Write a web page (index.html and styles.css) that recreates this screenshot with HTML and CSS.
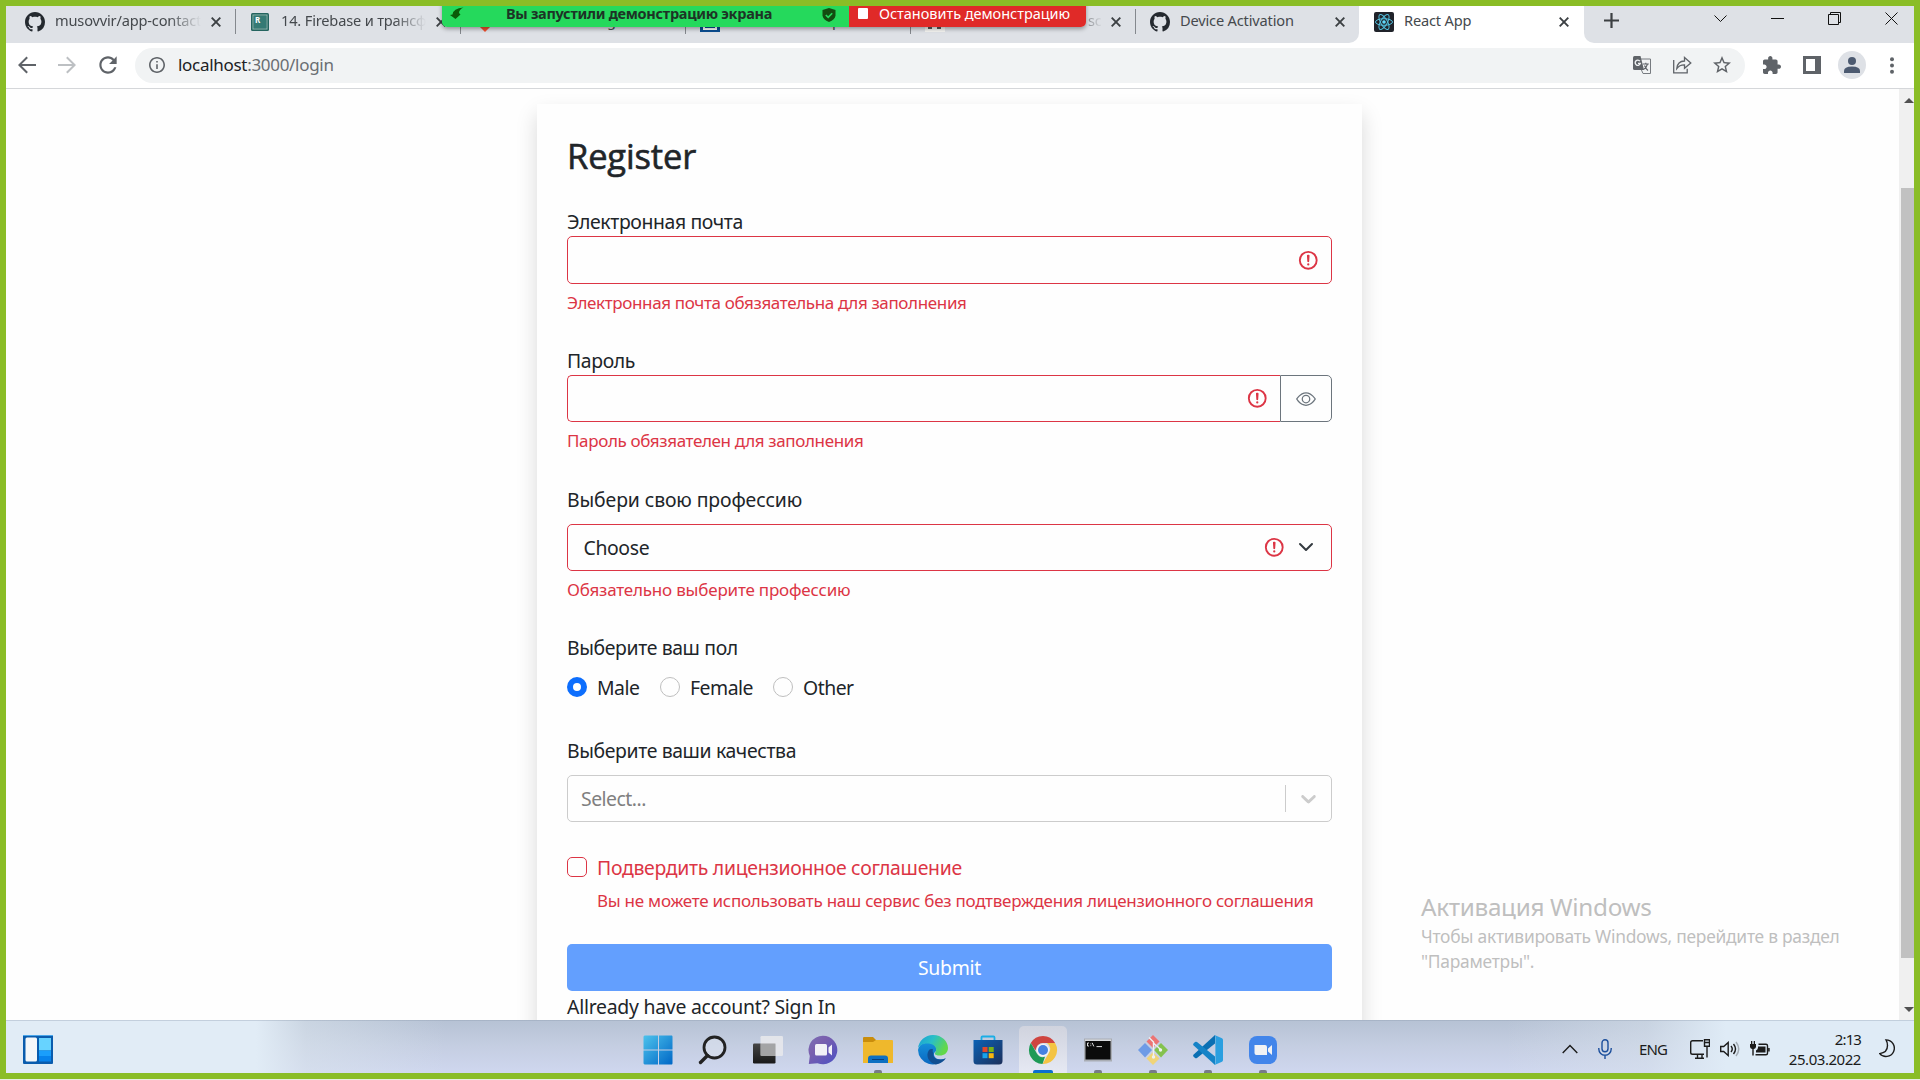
FILE: index.html
```html
<!DOCTYPE html>
<html lang="ru">
<head>
<meta charset="utf-8">
<title>React App</title>
<link rel="stylesheet" href="styles.css">
</head>
<body>
<svg class="defs" aria-hidden="true">
  <symbol id="github" viewBox="0 0 16 16"><path fill="#24292f" d="M8 0C3.58 0 0 3.58 0 8c0 3.54 2.29 6.53 5.47 7.59.4.07.55-.17.55-.38 0-.19-.01-.82-.01-1.49-2.01.37-2.53-.49-2.69-.94-.09-.23-.48-.94-.82-1.13-.28-.15-.68-.52-.01-.53.63-.01 1.08.58 1.23.82.72 1.21 1.87.87 2.33.66.07-.52.28-.87.51-1.07-1.78-.2-3.64-.89-3.64-3.95 0-.87.31-1.59.82-2.15-.08-.2-.36-1.02.08-2.12 0 0 .67-.21 2.2.82.64-.18 1.32-.27 2-.27s1.36.09 2 .27c1.53-1.04 2.2-.82 2.2-.82.44 1.1.16 1.92.08 2.12.51.56.82 1.27.82 2.15 0 3.07-1.87 3.75-3.65 3.95.29.25.54.73.54 1.48 0 1.07-.01 1.93-.01 2.2 0 .21.15.46.55.38A8.01 8.01 0 0 0 16 8c0-4.42-3.58-8-8-8z"/></symbol>
  <symbol id="close" viewBox="0 0 10 10"><path d="M.7.7l8.6 8.6M9.3.7L.7 9.3" stroke="#3c4043" stroke-width="1.9" fill="none"/></symbol>
  <symbol id="invalid" viewBox="0 0 12 12"><g stroke="#dc3545" fill="none"><circle cx="6" cy="6" r="4.5"/><path stroke-linejoin="round" d="M5.8 3.6h.4L6 6.5z"/></g><circle cx="6" cy="8.2" r=".6" fill="#dc3545"/></symbol>
</svg>

<header class="tabs">
  <div class="tab tab-repo"><svg class="fav"><use href="#github"/></svg><span class="tab-title fade">musovvir/app-contacts</span><svg class="x"><use href="#close"/></svg></div>
  <div class="tab tab-lesson">
    <svg class="fav-sm" viewBox="0 0 18 18"><rect width="18" height="18" rx="1.500" fill="#24645f"/><rect x="2" y="2" width="14" height="14" fill="none" stroke="#8fb9b2" stroke-width="1"/><rect x="3" y="3" width="12" height="12" fill="#357a74"/><text x="4" y="9.500" class="fav-letter">R</text></svg>
    <span class="tab-title fade">14. Firebase и трансформация</span><svg class="x"><use href="#close"/></svg>
  </div>
  <div class="tab tab-narrow"><svg class="fav" viewBox="0 0 20 20"><path d="M10 0l10 10-10 10L0 10z" fill="#f0502f"/></svg><span class="tab-title">g</span></div>
  <div class="tab tab-narrow"><svg class="fav" viewBox="0 0 20 20"><path fill="#0b4f93" d="M0 0h20v20H0z"/><path fill="none" stroke="#fff" stroke-width="2" d="M4 4h12v13H4z"/></svg><span class="tab-title">р</span></div>
  <div class="tab tab-cut"><svg class="fav" viewBox="0 0 20 20"><path fill="#f5f5f2" d="M0 0h20v20H0z"/><path d="M3 16h4M12 16h4" stroke="#555" stroke-width="2"/></svg><span class="tab-title fade">sc</span><svg class="x"><use href="#close"/></svg></div>
  <div class="tab tab-device"><svg class="fav"><use href="#github"/></svg><span class="tab-title">Device Activation</span><svg class="x"><use href="#close"/></svg></div>
  <div class="tab tab-active">
    <svg class="fav" viewBox="0 0 20 20"><rect width="20" height="20" rx="2" fill="#20232a"/><g fill="none" stroke="#53c1de" stroke-width="1"><ellipse cx="10" cy="10" rx="8.500" ry="3.300"/><ellipse cx="10" cy="10" rx="8.500" ry="3.300" transform="rotate(60 10 10)"/><ellipse cx="10" cy="10" rx="8.500" ry="3.300" transform="rotate(120 10 10)"/></g><circle cx="10" cy="10" r="1.800" fill="#61dafb"/></svg>
    <span class="tab-title">React App</span><svg class="x"><use href="#close"/></svg>
  </div>
  <div class="window-bar">
    <svg class="plus" viewBox="0 0 15 15"><path d="M7.500 0v15M0 7.500h15" stroke="#3c4043" stroke-width="2.200"/></svg>
    <div class="window-buttons">
      <svg viewBox="0 0 13 13"><path d="M.5 3.500l6 6 6-6"/></svg>
      <svg viewBox="0 0 13 13"><path d="M0 6.500h13"/></svg>
      <svg viewBox="0 0 13 13"><path d="M.5 2.500h10v10H.5zM2.500 2.500v-2h10v10h-2"/></svg>
      <svg viewBox="0 0 13 13"><path d="M.5.5l12 12M12.500.5l-12 12"/></svg>
    </div>
  </div>
</header>

<div class="toolbar">
  <svg class="nav" viewBox="0 0 24 24"><path d="M21 11H6.830l6.090-6.090L11.500 3.500 3 12l8.500 8.500 1.410-1.410L6.830 13H21z"/></svg>
  <svg class="nav nav-off" viewBox="0 0 24 24"><path d="M3 11h14.170l-6.090-6.090 1.420-1.410L21 12l-8.500 8.500-1.410-1.410L17.170 13H3z"/></svg>
  <svg class="nav nav-reload" viewBox="0 0 24 24"><path d="M17.650 6.350C16.200 4.900 14.210 4 12 4c-4.420 0-7.990 3.580-7.990 8s3.570 8 7.990 8c3.730 0 6.840-2.550 7.730-6h-2.080c-.82 2.330-3.040 4-5.650 4-3.310 0-6-2.690-6-6s2.690-6 6-6c1.660 0 3.140.69 4.220 1.780L13 11h7V4l-2.350 2.350z"/></svg>
  <div class="omnibox">
    <svg class="info" viewBox="2 2 20 20"><path d="M11 7h2v2h-2zm0 4h2v6h-2zm1-9C6.480 2 2 6.480 2 12s4.480 10 10 10 10-4.480 10-10S17.520 2 12 2zm0 18c-4.410 0-8-3.590-8-8s3.590-8 8-8 8 3.590 8 8-3.590 8-8 8z"/></svg>
    <span class="url"><b>localhost</b>:3000/login</span>
    <svg class="translate" viewBox="0 0 18 18"><path d="M8 3h9.500v14.500H10L8 13" fill="#f1f3f4" stroke="#777b80" stroke-width="1"/><path d="M0 1.500Q0 0 1.500 0h6L11 14H1.500Q0 14 0 12.500z" fill="#5f6368"/><path d="M6.900 5.200A2.600 2.600 0 1 0 7.300 7.400H5" fill="none" stroke="#f1f3f4" stroke-width="1.400"/><path d="M9.800 8h6M12.800 6.800V8M14.500 8q-1 4-4 5.500M11.500 9.500q1 3 3.500 5" fill="none" stroke="#5f6368" stroke-width="1.100"/></svg>
    <svg class="share" viewBox="0 0 19 18"><path d="M.7 4v12.800h13.500v-4" /><path d="M3.800 12.500Q4.500 5.200 11.500 5V1.500L17.800 7l-6.300 5.300V8.900Q6.500 8.800 3.800 12.500z"/></svg>
    <svg class="star" viewBox="2 2 20 20"><path d="M22 9.240l-7.190-.62L12 2 9.190 8.630 2 9.240l5.460 4.730L5.820 21 12 17.270 18.180 21l-1.630-7.030L22 9.240zM12 15.400l-3.760 2.270 1-4.280-3.320-2.880 4.380-.38L12 6.100l1.710 4.040 4.380.38-3.320 2.880 1 4.280L12 15.400z"/></svg>
  </div>
  <svg class="ext" viewBox="2 1 21 21"><path d="M20.500 11H19V7c0-1.100-.9-2-2-2h-4V3.500C13 2.120 11.880 1 10.500 1S8 2.120 8 3.500V5H4c-1.100 0-1.990.9-1.990 2v3.800H3.500c1.490 0 2.700 1.210 2.700 2.700s-1.210 2.700-2.700 2.700H2V20c0 1.100.9 2 2 2h3.800v-1.500c0-1.490 1.210-2.700 2.700-2.700 1.490 0 2.700 1.210 2.700 2.700V22H17c1.100 0 2-.9 2-2v-4h1.500c1.380 0 2.500-1.120 2.500-2.500S21.880 11 20.500 11z"/></svg>
  <svg class="panel" viewBox="0 0 18 18"><path fill-rule="evenodd" d="M0 0h18v18H0zM3 3v12h9V3z"/></svg>
  <svg class="avatar" viewBox="0 0 28 28"><circle cx="14" cy="14" r="14" fill="#dee1e6"/><circle cx="14" cy="10" r="4" fill="#4c5a70"/><path d="M6 22v-2q0-4.500 8-4.500t8 4.500v2z" fill="#4c5a70"/></svg>
  <svg class="dots" viewBox="0 0 4 17"><circle cx="2" cy="2.200" r="2"/><circle cx="2" cy="8.500" r="2"/><circle cx="2" cy="14.800" r="2"/></svg>
</div>

<div class="viewport">
  <main class="page">
    <form class="card">
      <h3>Register</h3>
      <section class="field">
        <label>Электронная почта</label>
        <div class="control invalid"><svg class="mark"><use href="#invalid"/></svg></div>
        <p class="error">Электронная почта обязяательна для заполнения</p>
      </section>
      <section class="field">
        <label>Пароль</label>
        <div class="input-group">
          <div class="control invalid"><svg class="mark"><use href="#invalid"/></svg></div>
          <div class="eye"><svg viewBox="0 0 16 16"><path d="M16 8s-3-5.500-8-5.500S0 8 0 8s3 5.500 8 5.500S16 8 16 8zM1.173 8a13.133 13.133 0 0 1 1.660-2.043C4.120 4.668 5.880 3.500 8 3.500c2.120 0 3.879 1.168 5.168 2.457A13.133 13.133 0 0 1 14.828 8c-.058.087-.122.183-.195.288-.335.480-.830 1.120-1.465 1.755C11.879 11.332 10.119 12.500 8 12.500c-2.120 0-3.879-1.168-5.168-2.457A13.134 13.134 0 0 1 1.172 8z"/><path d="M8 5.500a2.500 2.500 0 1 0 0 5 2.500 2.500 0 0 0 0-5zM4.500 8a3.500 3.500 0 1 1 7 0 3.500 3.500 0 0 1-7 0z"/></svg></div>
        </div>
        <p class="error">Пароль обязяателен для заполнения</p>
      </section>
      <section class="field">
        <label class="spaced loose">Выбери свою профессию</label>
        <div class="control invalid select"><span class="choice">Choose</span><svg class="mark"><use href="#invalid"/></svg><svg class="caret" viewBox="0 0 16 16"><path fill="none" stroke="#343a40" stroke-linecap="round" stroke-linejoin="round" stroke-width="2" d="M2 5l6 6 6-6"/></svg></div>
        <p class="error loose">Обязательно выберите профессию</p>
      </section>
      <section class="field">
        <label class="spaced">Выберите ваш пол</label>
        <div class="radios">
          <span class="radio male"><i class="dot on"></i><span class="option">Male</span></span>
          <span class="radio female"><i class="dot"></i><span class="option">Female</span></span>
          <span class="radio"><i class="dot"></i><span class="option">Other</span></span>
        </div>
      </section>
      <section class="field">
        <label class="spaced">Выберите ваши качества</label>
        <div class="control multi"><span class="choice">Select...</span><i class="rule"></i><svg class="chev" viewBox="0 0 20 20"><path d="M4.516 7.548c0.436-0.446 1.043-0.481 1.576 0l3.908 3.747 3.908-3.747c0.533-0.481 1.141-0.446 1.574 0 0.436 0.445 0.408 1.197 0 1.615-0.406 0.418-4.695 4.502-4.695 4.502-0.217 0.223-0.502 0.335-0.787 0.335s-0.570-0.112-0.789-0.335c0 0-4.287-4.084-4.695-4.502s-0.436-1.170 0-1.615z"/></svg></div>
      </section>
      <section class="field license">
        <span class="check"><i class="box"></i><span class="option">Подвердить лицензионное соглашение</span></span>
        <p class="error">Вы не можете использовать наш сервис без подтверждения лицензионного соглашения</p>
      </section>
      <button type="button" class="submit">Submit</button>
      <p class="signin">Allready have account? Sign In</p>
    </form>
  </main>
  <div class="scrollbar"><svg class="up" viewBox="0 0 10 5"><path d="M0 5l5-5 5 5z"/></svg><i class="thumb"></i><svg class="down" viewBox="0 0 10 5"><path d="M0 0l5 5 5-5z"/></svg></div>
</div>

<footer class="taskbar">
  <svg class="widgets" viewBox="0 0 30 29"><rect width="30" height="29" rx="1" fill="#0a5cad"/><path d="M0 .5h30" stroke="#4aa6ea"/><rect x="2.500" y="2.500" width="11.500" height="24" rx="1.500" fill="#f5f7f9"/><path fill="#67d3ff" d="M16 3h12v12.500H16z"/><path fill="#1a9efb" d="M16 15.500h12V21H16z"/><path fill="#0783ec" d="M16 21h12v5.500H16z"/></svg>
  <nav class="apps">
    <span class="app"><svg viewBox="0 0 30 30"><defs><linearGradient id="win" x1="0" y1="0" x2="1" y2="1"><stop offset="0" stop-color="#4cc2ec"/><stop offset="1" stop-color="#0067c6"/></linearGradient></defs><path fill="url(#win)" d="M1.500.5H15v14H.5v-13zM16 .5h13l.5 1v13H16zM.5 15.500H15v14H1.500l-1-1zM16 15.500h13.500v13l-.5 1H16z"/></svg></span>
    <span class="app"><svg viewBox="0 0 30 30"><circle cx="16.500" cy="12.500" r="10.500" fill="#dfe5ef" fill-opacity=".5" stroke="#222" stroke-width="2.800"/><path d="M9.500 20.500l-7 7" stroke="#222" stroke-width="3.400" stroke-linecap="round"/></svg></span>
    <span class="app"><svg viewBox="0 0 30 30"><defs><linearGradient id="tv" x1="0" y1="0" x2="0" y2="1"><stop offset="0" stop-color="#454545"/><stop offset="1" stop-color="#191919"/></linearGradient></defs><rect x="0" y="8.500" width="22.500" height="20" rx="1.200" fill="url(#tv)"/><rect x="7.500" y="1" width="22.500" height="20" rx="1.200" fill="#e9e9ec" fill-opacity=".86"/><path d="M7.500 8.500h15V21h-15z" fill="#777" fill-opacity=".5"/></svg></span>
    <span class="app"><svg viewBox="0 0 30 30"><defs><linearGradient id="chat" x1="0" y1="0" x2="1" y2="1"><stop offset="0" stop-color="#7b6fb4"/><stop offset=".35" stop-color="#7a5fae"/><stop offset="1" stop-color="#4b50c4"/></linearGradient></defs><path fill="url(#chat)" d="M15 .7a14.300 14.300 0 1 1-5.500 27.500L.8 29l1-8A14.300 14.300 0 0 1 15 .7z"/><rect x="7" y="9" width="12" height="11.500" rx="1.500" fill="#f2f0f7"/><path fill="#f2f0f7" d="M20.500 12.500L24 9.500v11l-3.500-3z"/></svg></span>
    <span class="app run"><svg viewBox="0 0 30 30"><path d="M0 3q0-1 1-1h9l3 3v7H0z" fill="#c98d0c"/><path d="M0 7h10l3-2h16q1 0 1 1v21.500q0 .5-.5.500H.5Q0 28 0 27.500z" fill="#efb82c"/><path d="M5 28v-4.500q0-3 3-3h14q3 0 3 3V28z" fill="#0d70c2"/><path d="M9 24.500h12" stroke="#073f7c"/></svg></span>
    <span class="app"><svg viewBox="0 0 30 30"><defs><linearGradient id="eg" x1="0" y1="0" x2="1" y2=".4"><stop offset="0" stop-color="#189fd8"/><stop offset=".5" stop-color="#2abfc6"/><stop offset="1" stop-color="#62d84a"/></linearGradient><linearGradient id="eb" x1="0" y1="0" x2="0" y2="1"><stop offset="0" stop-color="#1590da"/><stop offset="1" stop-color="#0a67c0"/></linearGradient></defs><path fill="url(#eb)" d="M0 15C1 8 9 6 15 9c5 2.500 4 7 1 9-1 6 6 8 11 5.500A15 15 0 0 1 0 15z"/><path fill="#114f92" d="M11 15c-4 6 0 13 7 14.500 5-.8 8-3.500 10-6.500-5 3-14 2-12.500-5-1-1-1-2-.5-3.500-1-.8-3-.5-4 .5z"/><path fill="url(#eg)" d="M0 13.500A15 15 0 0 1 15 0c9 0 15 6.500 15 13 0 5-4 7.500-8 7.500-3.500 0-6-1-5-2.500 3-4 0-9-6.500-9.500C5 8.200 1 10.500 0 13.500z"/></svg></span>
    <span class="app"><svg viewBox="0 0 30 30"><defs><linearGradient id="st" x1="0" y1="0" x2="1" y2="1"><stop offset="0" stop-color="#0c62b5"/><stop offset="1" stop-color="#1c2f5b"/></linearGradient></defs><path d="M8.500 7V2.500q0-1 1-1h11q1 0 1 1V7" fill="none" stroke="#1aaee6" stroke-width="1.800"/><path d="M.5 5h29v21q0 3.500-3.500 3.500H4Q.5 29.500.5 26z" fill="url(#st)"/><path fill="#e2492b" d="M9.500 12h5v5h-5z"/><path fill="#7ab316" d="M15.700 12h5v5h-5z"/><path fill="#18a3ec" d="M9.500 18.200h5v5h-5z"/><path fill="#fbb60e" d="M15.700 18.200h5v5h-5z"/></svg></span>
    <span class="app active"><svg viewBox="0 0 30 30"><path fill="#cf4540" d="M2.800 8A14 14 0 0 1 27.100 8H15a7 7 0 0 0-6.500 4.500l-1 3z"/><path fill="#f4c443" d="M27.100 8A14 14 0 0 1 14.500 29l6-10.500A7 7 0 0 0 19 8z"/><path fill="#1e9a55" d="M14.500 29A14 14 0 0 1 2.800 8l6.100 10.500A7 7 0 0 0 17 21.800z"/><circle cx="15" cy="15" r="6.300" fill="#f4f4f4"/><circle cx="15" cy="15" r="5" fill="#4681e2"/></svg></span>
    <span class="app run"><svg viewBox="0 0 30 30"><path fill="#a9adb4" d="M1 3.500h28v23H1z"/><path fill="#d9dbde" d="M2 4.500h26v1.500H2z"/><path fill="#0b0b0b" d="M2.500 6h25v18.500h-25z"/><path d="M6 8H4.500v3H6M7.800 8.500v.8M7.800 10.300v.8M9.200 7.800l1.600 3.600M13.500 11.600h5.500" fill="none" stroke="#ddd" stroke-width="1"/></svg></span>
    <span class="app run"><svg viewBox="0 0 30 30"><path fill="#ec7474" d="M15 0l6.500 6.500L15 13 8.500 6.500z"/><path fill="#f0d479" d="M15 17l6.500 6.500L15 30l-6.500-6.500z"/><path fill="#6e9be6" d="M7 8l7 7-7 7.500L0 15z"/><path fill="#84c24e" d="M23 8l7 7-7 7.500L16 15z"/><path d="M11 2.500l4.500 4.500v15M15.500 8l3 3M19 11l4 4" fill="none" stroke="#eef1f4" stroke-width="1.400"/><circle cx="15.500" cy="22" r="1.700" fill="#eef1f4"/><circle cx="22.500" cy="15" r="1.700" fill="#eef1f4"/></svg></span>
    <span class="app run"><svg viewBox="0 0 30 30"><path fill="#0a6fb3" d="M22 0v8.500L4 23q-1 .6-2 0L.5 21.500q-.8-1 .2-2z"/><path fill="#1583c7" d="M22 30v-8.500L4 7Q3 6.400 2 7L.5 8.500q-.8 1 .2 2z"/><path fill="#2a9fe0" d="M21.500 0L29 3.300q1 .5 1 1.700v20q0 1.200-1 1.700L21.500 30q.9-1 .9-2V2q0-1-.9-2z"/></svg></span>
    <span class="app run"><svg viewBox="0 0 30 30"><rect x="1" y="1" width="28" height="28" rx="8" fill="#4285ea"/><path fill="#f1f2f4" d="M6.500 10H17q2 0 2 2v8H8.500q-2 0-2-2zM20 13.500l4-3.500v10l-4-3.500z"/></svg></span>
  </nav>
  <div class="tray">
    <svg class="t-up" viewBox="0 0 16 10"><path d="M.7 9l7.300-7.500L15.300 9"/></svg>
    <svg class="t-mic" viewBox="0 0 14 20"><rect x="4" y=".8" width="6" height="12" rx="3"/><path d="M.8 9v1a6.200 6.200 0 0 0 12.400 0V9M7 16.200V20"/></svg>
    <span class="lang">ENG</span>
    <svg class="t-net" viewBox="0 0 20 20"><path d="M13 1.700H2.500q-1.800 0-1.800 1.800v10q0 1.800 1.800 1.800H14M5 19.200h9M7.500 15.500v3.500M12 15.500v3.500M14.500.7h5v6.500h-5zM17 7.500V18.500M14.500 3.500h5"/></svg>
    <svg class="t-vol" viewBox="0 0 20 16"><path d="M.7 5.500v5h3l4.500 4V1.500l-4.500 4z"/><path d="M11 5q2.500 3 0 6M13.500 3q4 5 0 10"/><path d="M16 1q5.500 7 0 14" opacity=".3"/></svg>
    <svg class="t-bat" viewBox="0 0 20 16"><path fill="#1b1b1b" stroke="none" d="M0 3h6v3Q5.500 8 3.700 8v6.500H2.300V8Q.5 8 0 6zM1 0h1.300v3H1zM3.700 0H5v3H3.700zM8 5.500h7.500v6H6V9.500q2-1 2-3z"/><path d="M8.500 3.200H16q1.500 0 1.500 1.500v7.600q0 1.500-1.500 1.500H5.500M19 7v3.500"/></svg>
    <div class="clock"><span class="time">2:13</span><span>25.03.2022</span></div>
    <svg class="t-moon" viewBox="0 0 16 19"><path d="M7 .9a8.300 8.300 0 1 1-6.300 13.700C5.500 14 8.500 11 8.500 6.500 8.500 4.200 8 2.500 7 .9z"/></svg>
  </div>
</footer>

<aside class="watermark"><h4>Активация Windows</h4><p>Чтобы активировать Windows, перейдите в раздел<br>"Параметры".</p></aside>

<div class="share-banner">
  <div class="sharing">
    <svg class="s-arrow" viewBox="0 0 14 13"><path d="M13.500.5Q9 2.500 9 6l1.500 1.500L5.500 12 0 8l2.500-.5Q3 1.500 13.500.5z"/></svg>
    <b>Вы запустили демонстрацию экрана</b>
    <svg class="s-shield" viewBox="0 0 14 14"><path fill="#134c11" d="M7 0l6.500 2v5.500Q13 11.500 7 14 1 11.500.5 7.500V2z"/><path d="M3.800 7l2.400 2.400 4-4.200" fill="none" stroke="#25d95c" stroke-width="1.600"/></svg>
  </div>
  <div class="stop"><i></i>Остановить демонстрацию</div>
</div>
</body>
</html>
```
FILE: styles.css
```css
*{box-sizing:border-box}
html{background:#e6efe0}
body{margin:0;width:1920px;height:1079px;border:6px solid #8abd26;display:flex;flex-direction:column;overflow:hidden;position:relative;font-family:"Noto Sans","Open Sans",sans-serif;background:#fefefe;color:#212529}
p,h3,h4{margin:0}
svg{display:block;flex:none}
.defs{position:absolute;width:0;height:0}

/* tab strip */
.tabs{height:37px;flex:none;display:flex;background:#fff}
.tab{height:37px;display:flex;align-items:center;background:#dee1e6;font-size:14.6px;letter-spacing:-.17px;color:#45494d;padding:0 15px 6px 14px;position:relative}
.tab:not(.tab-active):not(.tab-device)::after{content:"";position:absolute;right:0;top:3px;width:1px;height:25px;background:#84888d}
.tab-title{flex:1;margin-left:10px;line-height:20px;height:23px;white-space:nowrap;overflow:hidden}
.fade{-webkit-mask-image:linear-gradient(90deg,#000 calc(100% - 32px),transparent);mask-image:linear-gradient(90deg,#000 calc(100% - 32px),transparent)}
.fav{width:20px;height:20px}
.fav-sm{width:18px;height:18px}
.fav-letter{font:bold 8px "Noto Sans",sans-serif;fill:#fff}
.x{width:10px;height:10px;margin-left:10px}
.tab-repo{width:230px;padding-left:19px}
.tab-lesson{width:225px;padding-left:15px}
.tab-lesson .tab-title{margin-left:12px}
.tab-narrow{width:225px}
.tab-narrow .tab-title{margin-left:112px}
.tab-cut{width:225px}
.tab-cut .tab-title{margin-left:143px}
.tab-cut .fade{-webkit-mask-image:linear-gradient(90deg,rgba(0,0,0,.5),transparent 15px);mask-image:linear-gradient(90deg,rgba(0,0,0,.5),transparent 15px)}
.tab-device{width:223px;border-bottom-right-radius:10px;padding-right:14px}
.tab-active{width:225px;background:#fff;padding:0 15px 6px 15px}
.window-bar{flex:1;background:#dee1e6;border-bottom-left-radius:10px;display:flex;justify-content:space-between;padding:0 16px 0 20px}
.plus{width:15px;height:15px;margin-top:7px}
.window-buttons{display:flex;gap:44px;padding-top:6px}
.window-buttons svg{width:13px;height:13px;fill:none;stroke:#111;stroke-width:1}

/* toolbar */
.toolbar{height:46px;flex:none;display:flex;align-items:center;background:#fff;border-bottom:1px solid #d5d7da;padding:0 0 1px 9px;fill:#5f6368}
.nav{width:24px;height:24px;margin-right:16px}
.nav-off{fill:#bdc0c3}
.nav-reload{width:26px;height:26px;margin:0 14px 0 0}
.omnibox{width:1610px;flex:none;height:35px;border-radius:18px;background:#f1f3f4;display:flex;align-items:center;padding:0 14px}
.info{width:16px;height:16px}
.url{font-size:17px;letter-spacing:-.3px;margin-left:13px;color:#6a6e72;flex:1;line-height:30px}
.url b{font-weight:400;color:#202124}
.translate{width:18px;height:18px;margin-right:22px}
.share{width:19px;height:18px;fill:none;stroke:#5f6368;stroke-width:1.3;margin-right:21px}
.star{width:18px;height:18px}
.ext{width:18px;height:18px;margin-left:18px}
.panel{width:18px;height:18px;margin-left:22px}
.avatar{width:28px;height:28px;margin-left:17px}
.dots{width:4px;height:17px;margin-left:24px}

/* page */
.viewport{height:931px;flex:none;display:flex;overflow:hidden}
.page{width:1893px;padding-left:531px;overflow:hidden}
.card{width:825px;height:990px;margin-top:15px;padding:30px;box-shadow:0 10px 20px rgba(0,0,0,.15);background:#fefefe;font-size:19.4px;line-height:30px;letter-spacing:-.37px}
h3{font:500 34.5px/42px "Open Sans","Noto Sans",sans-serif;height:42px;padding-top:1px;letter-spacing:-.15px;margin-bottom:30px;-webkit-text-stroke:.6px #212529}
.field{margin-bottom:30px}
label{display:block;height:30px;padding-top:1px}
.spaced{margin-bottom:10px}
.loose{letter-spacing:-.11px}
.control{height:47.5px;border:1px solid #ccc;border-radius:5px;display:flex;align-items:center;justify-content:flex-end;flex:1}
.invalid{border-color:#dc3545;padding-right:12px}
.mark{width:22.5px;height:22.5px}
.choice{flex:1;padding:1px 0 0 15.5px}
.input-group{display:flex}
.input-group .invalid{border-radius:5px 0 0 5px;border-right:0}
.eye{width:52px;height:47.5px;border:1px solid #6c757d;border-radius:0 5px 5px 0;display:flex;align-items:center;justify-content:center}
.eye svg{width:20px;height:20px;fill:#6c757d}
.error{font-size:17px;line-height:26.25px;height:26.25px;padding-top:1px;color:#dc3545;margin-top:5px;letter-spacing:-.36px}
.error.loose{letter-spacing:-.2px}
.select{padding-right:17px}
.caret{width:16px;height:16px;margin-left:13px}
.radios{display:flex;height:30px;margin-bottom:32.5px;letter-spacing:-.5px}
.radio{display:flex;align-items:center}
.option{padding-top:1px}
.male{width:93px}
.female{width:113px}
.dot{width:20px;height:20px;border:1px solid #bfbfbf;border-radius:50%;margin-right:10px}
.dot.on{border:6px solid #0d6efd;background:#fff}
.multi{border-color:#ccc;color:#808080;letter-spacing:-.5px}
.multi .choice{padding-left:13px}
.rule{width:1px;height:27px;background:#ccc}
.chev{width:25px;height:25px;margin:0 10px;fill:#ccc}
.check{display:flex;align-items:center;height:30px;color:#dc3545;letter-spacing:-.285px}
.box{width:20px;height:20px;border:1px solid #dc3545;border-radius:5px;margin-right:10px}
.license .error{margin-left:30px;letter-spacing:-.25px;white-space:nowrap}
.submit{display:block;width:100%;height:47.5px;border:0;border-radius:5px;background:#639ffe;color:#fff;font:inherit;letter-spacing:-.28px;padding:1px 0 0}
.signin{letter-spacing:-.245px;padding-top:1px}
.scrollbar{width:15px;background:#f0f0f0;display:flex;flex-direction:column;align-items:flex-end;padding-top:9px;fill:#505050}
.scrollbar svg{width:10px;height:5px}
.thumb{width:13px;height:770px;margin:85px 0 49px;background:#c1c1c1}

/* taskbar */
.taskbar{height:53px;flex:none;display:grid;grid-template-columns:624px 660px 1fr;align-items:center;box-shadow:inset 0 1px rgba(140,155,175,.35);background:linear-gradient(90deg,#e1ecf6 0,#e1ecf6 250px,rgba(218,228,236,.55) 300px,rgba(214,224,238,0) 440px,rgba(214,224,238,0) 1500px,rgba(216,226,236,.5) 1640px,#dfebf6 1720px),linear-gradient(180deg,#b6c2d4,#c5cee2 50%,#cfd7ef)}
.widgets{width:30px;height:29px;margin-left:17px;margin-top:6px}
.apps{display:grid;grid-template-columns:repeat(12,55px);height:53px}
.app{display:flex;justify-content:center;padding-top:15px;position:relative}
.app svg{width:30px;height:30px}
.active{margin:6px 3.5px 0;padding-top:9px;background:linear-gradient(#d0d3de,#e6e9f3);border-radius:5px 5px 0 0}
.run::after,.active::after{content:"";position:absolute;bottom:0;left:50%;width:8px;height:3px;margin-left:-4px;border-radius:2px 2px 0 0;background:#777c89}
.active::after{width:20px;margin-left:-10px;background:#0a6fd0}
.tray{display:flex;align-items:center;padding:4px 0 0 272px;font-size:15px;color:#1b1b1b}
.tray svg{fill:none;stroke:#1b1b1b;stroke-width:1.4}
.t-up{width:16px;height:10px}
.tray .t-mic{width:14px;height:20px;margin-left:20px;stroke:#1c4f9c}
.lang{width:28px;margin-left:27px;letter-spacing:-.9px;line-height:20px}
.t-net{width:20px;height:20px;margin-left:23px}
.t-vol{width:20px;height:16px;margin-left:10px}
.t-bat{width:20px;height:16px;margin-left:10px}
.clock{width:91px;display:flex;flex-direction:column;text-align:right;line-height:20px;letter-spacing:-.45px}
.time{letter-spacing:-.9px}
.t-moon{width:16px;height:19px;margin-left:18px}

/* overlays */
.watermark{position:absolute;left:1415px;top:885px;color:#bfbfbf}
.watermark h4{font-weight:400;font-size:24.3px;line-height:31px;letter-spacing:-.32px}
.watermark p{font-size:17.4px;line-height:25px;letter-spacing:-.25px;margin-top:2px}
.share-banner{position:absolute;left:436px;top:-6px;height:27px;display:flex;border-radius:0 0 5px 5px;overflow:hidden;box-shadow:0 2px 4px rgba(0,0,0,.35);white-space:nowrap;font-size:14.5px;line-height:27px}
.sharing{width:407px;background:#25d95c;display:flex;align-items:center;padding:0 13px 0 8px}
.sharing b{margin-left:42px;flex:1;letter-spacing:-.29px;color:#1d3326}
.s-arrow{width:14px;height:13px;fill:#0a5b08}
.s-shield{width:14px;height:14px;margin-top:3px}
.stop{width:237px;background:#e02a28;color:#fff;display:flex;align-items:center;letter-spacing:-.03px;padding-bottom:1px}
.stop i{width:10px;height:11px;border-radius:1px;background:#fff;margin:0 11px 0 9px}
```
